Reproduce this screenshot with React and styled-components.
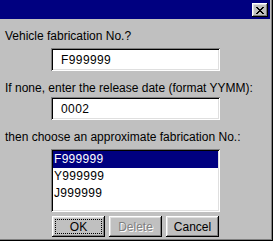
import React from "react";
import styled, { createGlobalStyle } from "styled-components";

const Global = createGlobalStyle`
  html, body { margin: 0; padding: 0; background: #c0c0c0; }
  body { font-family: "Liberation Sans", Arial, sans-serif; font-size: 12px; }
`;

const Window = styled.div`
  box-sizing: border-box;
  width: 273px;
  height: 241px;
  background: #c0c0c0;
  padding: 0 3px 2px 0;
  box-shadow: inset -1px -1px #000, inset -2px -2px #808080;
  display: flex;
  flex-direction: column;
  color: #000;
  font-family: "Liberation Sans", Arial, sans-serif;
  font-size: 12px;
`;

const TitleBar = styled.div`
  height: 19px;
  flex: none;
  background: #000080;
  display: flex;
  justify-content: flex-end;
  align-items: flex-start;
  padding: 3px 2px 0 0;
  box-sizing: border-box;
`;

const CloseButton = styled.button`
  width: 16px;
  height: 14px;
  padding: 0;
  border: none;
  background: #c0c0c0;
  box-shadow: inset -1px -1px #000, inset 1px 1px #fff, inset -2px -2px #808080, inset 2px 2px #dfdfdf;
  display: flex;
  align-items: center;
  justify-content: center;
`;

const Body = styled.div`
  display: flex;
  flex-direction: column;
  padding-left: 5px;
  flex: 1;
`;

const Label = styled.div`
  line-height: 14px;
  height: 14px;
  white-space: nowrap;
  margin-top: ${(p) => p.$top}px;
`;

const Field = styled.div`
  box-sizing: border-box;
  margin: ${(p) => p.$top}px 0 0 46px;
  width: 169px;
  height: 23px;
  background: #fff;
  box-shadow: inset 1px 1px #808080, inset -1px -1px #fff, inset 2px 2px #000, inset -2px -2px #dfdfdf;
  padding: 2px 2px 2px 10px;
  display: flex;
  align-items: center;
  line-height: 14px;
  letter-spacing: 0.4px;
`;

const List = styled.div`
  box-sizing: border-box;
  margin: 5px 0 0 46px;
  width: 169px;
  height: 63px;
  background: #fff;
  box-shadow: inset 1px 1px #808080, inset -1px -1px #fff, inset 2px 2px #000, inset -2px -2px #dfdfdf;
  padding: 2px;
  display: flex;
  flex-direction: column;
`;

const Item = styled.div`
  height: 17px;
  line-height: 17px;
  padding-left: 1px;
  letter-spacing: 0.3px;
  background: ${(p) => (p.$selected ? "#000080" : "transparent")};
  color: ${(p) => (p.$selected ? "#fff" : "#000")};
`;

const Buttons = styled.div`
  display: flex;
  gap: 4px;
  margin: 4px 0 0 47px;
`;

const Button = styled.button`
  box-sizing: border-box;
  width: 53px;
  height: 21px;
  padding: 3px;
  border: none;
  background: #c0c0c0;
  box-shadow: inset -1px -1px #000, inset 1px 1px #fff, inset -2px -2px #808080, inset 2px 2px #dfdfdf;
  font-family: "Liberation Sans", Arial, sans-serif;
  font-size: 12px;
  color: ${(p) => (p.disabled ? "#808080" : "#000")};
  text-shadow: ${(p) => (p.disabled ? "1px 1px #fff" : "none")};
  display: flex;
  align-items: stretch;
  justify-content: stretch;
`;

const ButtonFace = styled.span`
  flex: 1;
  display: flex;
  align-items: center;
  justify-content: center;
  border: 1px dotted ${(p) => (p.$focus ? "#000" : "transparent")};
`;

export default function App() {
  return (
    <>
      <Global />
      <Window>
        <TitleBar>
          <CloseButton aria-label="Close">
            <svg width="8" height="7" viewBox="0 0 8 7" shapeRendering="crispEdges">
              <path
                d="M0 0h2v1h1v1h2v-1h1v-1h2v1h-1v1h-1v1h-1v1h1v1h1v1h1v1h-2v-1h-1v-1h-2v1h-1v1h-2v-1h1v-1h1v-1h1v-1h-1v-1h-1v-1h-1z"
                fill="#000"
              />
            </svg>
          </CloseButton>
        </TitleBar>
        <Body>
          <Label $top={10}>Vehicle fabrication No.?</Label>
          <Field $top={5}>F999999</Field>
          <Label $top={10}>If none, enter the release date (format YYMM):</Label>
          <Field $top={2}>0002</Field>
          <Label $top={10}>then choose an approximate fabrication No.:</Label>
          <List>
            <Item $selected>F999999</Item>
            <Item>Y999999</Item>
            <Item>J999999</Item>
          </List>
          <Buttons>
            <Button>
              <ButtonFace $focus>OK</ButtonFace>
            </Button>
            <Button disabled>
              <ButtonFace>Delete</ButtonFace>
            </Button>
            <Button>
              <ButtonFace>Cancel</ButtonFace>
            </Button>
          </Buttons>
        </Body>
      </Window>
    </>
  );
}
